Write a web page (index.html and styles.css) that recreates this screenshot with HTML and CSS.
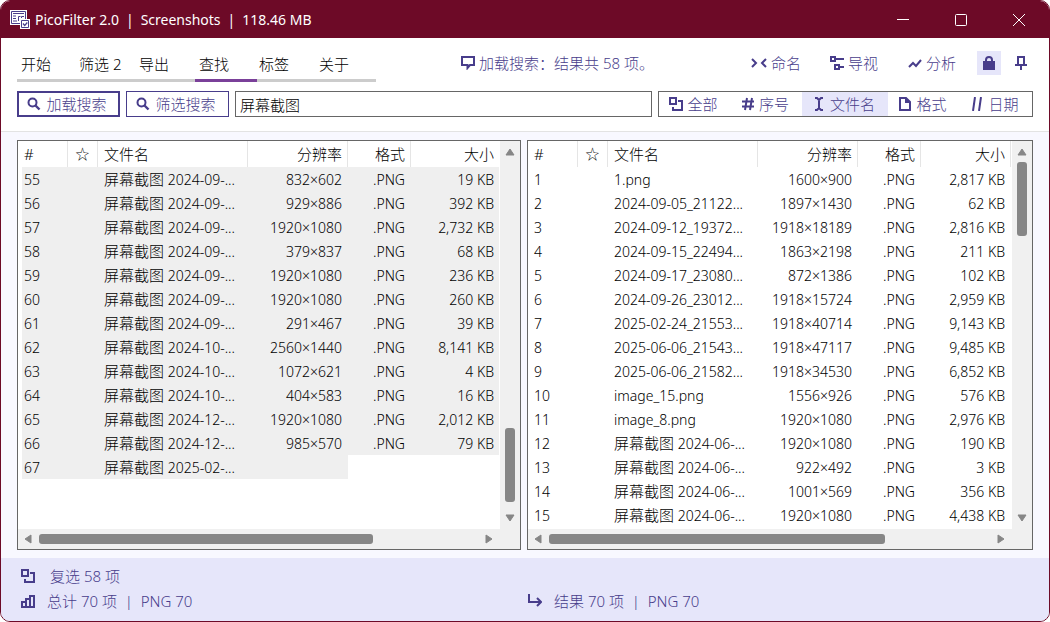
FILE: index.html
```html
<!DOCTYPE html>
<html lang="zh-CN">
<head>
<meta charset="utf-8">
<title>PicoFilter 2.0</title>
<link rel="stylesheet" href="styles.css">
</head>
<body>
<svg class="defs" width="0" height="0" aria-hidden="true">
  <symbol id="search" viewBox="0 0 14 14"><circle cx="5.5" cy="5.5" r="4" fill="none" stroke="currentColor" stroke-width="2"/><path d="M8.5 8.5 12.5 12.5" stroke="currentColor" stroke-width="2.4"/></symbol>
  <symbol id="copy" viewBox="0 0 14 14"><path d="M1 1h6v6H1zM9 4h4v9H4v-3" fill="none" stroke="currentColor" stroke-width="2"/></symbol>
  <symbol id="up" viewBox="0 0 10 10"><path d="M5 2 9 8H1z" fill="currentColor" stroke="currentColor" stroke-linejoin="round"/></symbol>
</svg>
<div class="window">
  <header class="titlebar">
    <svg class="logo" viewBox="0 0 20 20" aria-hidden="true"><path d="M0 0h17v15H0z" fill="#fff"/><path d="M1.500 1.500h14v12h-14z" fill="#fff" stroke="#483d8b"/><path d="M3 3.500h11M3 6h3M3 8.500h3M3 11h4M8.500 11V6.500h2M11.500 8V6.500H14" fill="none" stroke="#483d8b"/><path d="M10 9h10v10H10z" fill="#fff"/><path d="M11.500 10.500h7v7h-7z" fill="#fff" stroke="#483d8b"/><path d="m13 13.500 1.700 2 2.600-3" fill="none" stroke="#483d8b" stroke-width="1.200"/></svg>
    <h1 class="title"><span>PicoFilter 2.0</span><span>|</span><span>Screenshots</span><span>|</span><span>118.46 MB</span></h1>
    <div class="window-buttons">
      <button aria-label="最小化"><svg viewBox="0 0 12 12"><path d="M0 5.500h12"/></svg></button>
      <button aria-label="最大化"><svg viewBox="0 0 12 12"><rect x=".5" y=".5" width="11" height="11" rx="1"/></svg></button>
      <button aria-label="关闭"><svg viewBox="0 0 12 12"><path d="m0 0 12 12M12 0 0 12"/></svg></button>
    </div>
  </header>

  <section class="toolbar">
    <div class="menu-row">
      <nav class="tabs">
        <button>开始</button><button>筛选 2</button><button>导出</button><button class="active">查找</button><button>标签</button><button>关于</button>
      </nav>
      <p class="message"><svg class="icon" viewBox="0 0 14 14"><path d="M1 1h12v8H9L6.500 12V9H1z" fill="none" stroke="currentColor" stroke-width="2"/></svg>加载搜索：结果共 58 项。</p>
      <div class="actions">
        <button class="action"><svg class="icon wide" viewBox="0 0 16 14"><path d="m1 3 4 4-4 4M15 3l-4 4 4 4" fill="none" stroke="currentColor" stroke-width="2"/></svg>命名</button>
        <button class="action"><svg class="icon" viewBox="0 0 14 14"><path d="M1 1h4v4H1zM6 3h8M5 9h4v4H5zM10 11h4" fill="none" stroke="currentColor" stroke-width="2"/></svg>导视</button>
        <button class="action"><svg class="icon" viewBox="0 0 14 14"><path d="m1 11 4-4 3 3 5-6" fill="none" stroke="currentColor" stroke-width="2"/></svg>分析</button>
        <button class="square on" aria-label="锁定"><svg class="icon" viewBox="0 0 14 14"><path d="M1 5h12v9H1z" fill="currentColor"/><path d="M4 6V4a3 3 0 0 1 6 0v2" fill="none" stroke="currentColor" stroke-width="2"/></svg></button>
        <button class="square" aria-label="置顶"><svg class="icon" viewBox="0 0 14 14"><path d="M4 9V1h6v8M1 9h12M7 9v5" fill="none" stroke="currentColor" stroke-width="2"/></svg></button>
      </div>
    </div>
    <div class="search-row">
      <button class="search primary"><svg class="icon"><use href="#search"/></svg>加载搜索</button>
      <button class="search"><svg class="icon"><use href="#search"/></svg>筛选搜索</button>
      <input class="query" type="text" value="屏幕截图" aria-label="搜索内容">
      <div class="scope">
        <button><svg class="icon"><use href="#copy"/></svg>全部</button>
        <button><svg class="icon" viewBox="0 0 14 14"><path d="M6 1 4 13M11 1 9 13M1 4.500h12M1 9.500h12" fill="none" stroke="currentColor" stroke-width="2"/></svg>序号</button>
        <button class="on"><svg class="icon" viewBox="0 0 14 14"><path d="M3 1h2l2 2 2-2h2M3 13h2l2-2 2 2h2M7 2v10" fill="none" stroke="currentColor" stroke-width="2"/></svg>文件名</button>
        <button><svg class="icon" viewBox="0 0 14 14"><path d="M2 1h6l4 4v8H2zM8 1v4h4" fill="none" stroke="currentColor" stroke-width="2"/></svg>格式</button>
        <button><svg class="icon" viewBox="0 0 14 14"><path d="M5 0 3 14M11 0 9 14" fill="none" stroke="currentColor" stroke-width="2"/></svg>日期</button>
      </div>
    </div>
  </section>

  <main class="lists">
    <section class="list picked">
      <div class="view"><table>
        <colgroup><col class="c-num"><col class="c-star"><col><col class="c-res"><col class="c-fmt"><col class="c-size"></colgroup>
        <thead><tr><th>#</th><th class="star">☆</th><th>文件名</th><th class="r">分辨率</th><th class="r">格式</th><th class="r">大小</th></tr></thead>
        <tbody id="left-rows"></tbody>
      </table></div>
      <div class="vbar"><svg class="arrow"><use href="#up"/></svg><div class="track"><i class="before"></i><i class="thumb"></i><i class="after"></i></div><svg class="arrow down"><use href="#up"/></svg></div>
      <div class="hbar"><svg class="arrow left"><use href="#up"/></svg><div class="track"><i class="thumb"></i><i class="after"></i></div><svg class="arrow right"><use href="#up"/></svg></div>
    </section>
    <section class="list results">
      <div class="view"><table>
        <colgroup><col class="c-num"><col class="c-star"><col><col class="c-res"><col class="c-fmt"><col class="c-size"></colgroup>
        <thead><tr><th>#</th><th class="star">☆</th><th>文件名</th><th class="r">分辨率</th><th class="r">格式</th><th class="r">大小</th></tr></thead>
        <tbody id="right-rows"></tbody>
      </table></div>
      <div class="vbar"><svg class="arrow"><use href="#up"/></svg><div class="track"><i class="thumb"></i><i class="after"></i></div><svg class="arrow down"><use href="#up"/></svg></div>
      <div class="hbar"><svg class="arrow left"><use href="#up"/></svg><div class="track"><i class="thumb"></i><i class="after"></i></div><svg class="arrow right"><use href="#up"/></svg></div>
    </section>
  </main>

  <footer class="status">
    <div class="status-col">
      <p class="first"><svg class="icon"><use href="#copy"/></svg>复选 58 项</p>
      <p><svg class="icon" viewBox="0 0 14 14"><path d="M1 13V8h4v5M5 13V5h4v8M9 13V2h4v11M0 13h14" fill="none" stroke="currentColor" stroke-width="2"/></svg>总计 70 项&nbsp; |&nbsp; PNG 70</p>
    </div>
    <div class="status-col">
      <p><svg class="icon" viewBox="0 0 14 14"><path d="M1 0v8h12M9 4l4 4-4 4" fill="none" stroke="currentColor" stroke-width="2"/></svg>结果 70 项&nbsp; |&nbsp; PNG 70</p>
    </div>
  </footer>
</div>
<script src="app.js"></script>
</body>
</html>
```
FILE: styles.css
```css
* { box-sizing: border-box; }
:root {
  --ink: #483d8b;
  --maroon: #6d0a27;
  --lavender: #e6e6fa;
  --latin: "Noto Sans", "Noto Sans CJK SC", sans-serif;
}
body { margin: 0; background: #fff; font: 300 15px/24px var(--latin); color: #000; }
button, input { font: inherit; color: inherit; background: none; border: 0; padding: 0; margin: 0; }
p, h1 { margin: 0; }
button { display: flex; align-items: center; justify-content: center; white-space: nowrap; }
svg { display: block; flex: none; }
.defs { position: absolute; }
.icon { width: 14px; height: 14px; }
.icon.wide { width: 16px; }

.window { min-height: 100vh; display: flex; flex-direction: column; border: 1px solid var(--maroon); border-radius: 10px; overflow: hidden; background: #f8f8ff; }

.titlebar { display: flex; align-items: center; height: 37px; padding: 0 1px 0 9px; background: var(--maroon); color: #fff; }
.logo { width: 20px; height: 20px; }
.title { flex: 1; display: flex; gap: 7px; margin-left: 5px; font: 400 14px/20px var(--latin); }
.window-buttons { display: flex; }
.window-buttons button { width: 58px; height: 36px; }
.window-buttons svg { width: 12px; height: 12px; fill: none; stroke: #fff; stroke-width: 1; }

.toolbar { background: #fff; border-bottom: 1px solid #e3e3e3; padding: 10px 16px 14px; }
.menu-row { display: flex; align-items: flex-start; justify-content: space-between; margin-bottom: 9px; color: var(--ink); }
.tabs { display: grid; grid-template-columns: 58px repeat(5, 60px); padding-right: 1px; color: #000; border-bottom: 3px solid #ccc; }
.tabs button { height: 31px; padding: 0 4px; justify-content: flex-start; }
.tabs .active { position: relative; }
.tabs .active::after { content: ""; position: absolute; left: 0; right: -2px; bottom: -3px; height: 3px; background: #7a4099; }
.message { display: flex; align-items: center; gap: 4px; padding: 3px 4px 0 0; }
.actions { display: flex; align-items: center; gap: 8px; padding-top: 3px; margin-bottom: -1px; }
.action { gap: 4px; width: 70px; padding-right: 4px; }
.square { width: 24px; height: 24px; }
.on { background: var(--lavender); }

.search-row { display: flex; gap: 6px; color: var(--ink); }
.search { width: 103px; height: 26px; gap: 5px; padding-right: 3px; border: 1px solid var(--ink); }
.primary { border-width: 2px; }
.query { flex: 1; min-width: 0; height: 26px; padding: 0 4px; border: 1px solid #666; border-radius: 0; color: #000; }
.scope { display: grid; grid-template-columns: 72fr 71fr 86fr 72fr 72fr; width: 375px; border: 1px solid #666; }
.scope button { gap: 4px; height: 24px; padding-right: 3px; }

.lists { flex: 1; display: grid; grid-template-columns: 504fr 506fr; gap: 6px; padding: 8px 16px; }
.list { display: grid; grid-template: 1fr 20px / 1fr 20px; border: 1px solid #666; background: #f0f0f0; min-width: 0; }
.view { background: #fff; min-width: 0; overflow: hidden; }
.results .view { padding-right: 1px; }
table { width: 100%; table-layout: fixed; border-collapse: separate; border-spacing: 0; font: 300 14px/22px var(--latin); }
.c-num { width: 50px; } .c-star { width: 30px; } .c-res { width: 100px; } .c-fmt { width: 63px; } .c-size { width: 89px; }
.results .c-size { width: 90px; }
th { height: 26px; padding: 0 5px 0 6px; border-right: 1px solid #e5e5e5; font-size: 15px; font-weight: 300; text-align: left; }
.picked th:last-child { border-color: #fff; }
td { height: 24px; padding: 2px 6px 0; white-space: nowrap; overflow: hidden; }
th.star { padding: 0; text-align: center; font-size: 14px; }
th.r, td.r { text-align: right; }
.han { font-size: 15px; line-height: 20px; }
.picked td { background: #efefef; }
.picked td:first-child { border-left: 4px solid #fff; padding-left: 2px; }
.picked td:last-child { border-right: 1px solid #fff; padding-right: 5px; }
.picked td.blank { background: #fff; }

.vbar { display: flex; flex-direction: column; align-items: center; padding: 6px 0; }
.hbar { display: flex; align-items: center; padding: 0 6px 0 5px; }
.arrow { width: 10px; height: 10px; color: #868686; }
.down { transform: rotate(180deg); }
.left { transform: rotate(-90deg); }
.right { transform: rotate(90deg); }
.track { flex: 1; display: flex; }
.vbar .track { flex-direction: column; width: 10px; padding: 5px 0 4px; }
.hbar .track { height: 10px; padding: 0 4px 0 6px; }
.thumb { background: #868686; border-radius: 3px; }
.vbar .thumb { flex: 74; }
.vbar .before { flex: 266; }
.vbar .after { flex: 273; }
.picked .vbar .after { flex: 7; }
.hbar .thumb { flex: 334; }
.hbar .after { flex: 107; }

.status { display: grid; grid-template-columns: 507fr 505fr; min-height: 63px; padding: 5px 16px 8px 20px; background: var(--lavender); color: var(--ink); }
.status-col { display: flex; flex-direction: column; justify-content: flex-end; }
.status p { display: flex; align-items: center; gap: 12px; height: 25px; }
.status .first { gap: 15px; }
```
FILE: app.js
```js
const S = "屏幕截图";
const left = [
  [55, S, "2024-09-...", "832×602", "19"], [56, S, "2024-09-...", "929×886", "392"],
  [57, S, "2024-09-...", "1920×1080", "2,732"], [58, S, "2024-09-...", "379×837", "68"],
  [59, S, "2024-09-...", "1920×1080", "236"], [60, S, "2024-09-...", "1920×1080", "260"],
  [61, S, "2024-09-...", "291×467", "39"], [62, S, "2024-10-...", "2560×1440", "8,141"],
  [63, S, "2024-10-...", "1072×621", "4"], [64, S, "2024-10-...", "404×583", "16"],
  [65, S, "2024-12-...", "1920×1080", "2,012"], [66, S, "2024-12-...", "985×570", "79"],
  [67, S, "2025-02-...", "", ""]
];
const right = [
  [1, "", "1.png", "1600×900", "2,817"], [2, "", "2024-09-05_21122...", "1897×1430", "62"],
  [3, "", "2024-09-12_19372...", "1918×18189", "2,816"], [4, "", "2024-09-15_22494...", "1863×2198", "211"],
  [5, "", "2024-09-17_23080...", "872×1386", "102"], [6, "", "2024-09-26_23012...", "1918×15724", "2,959"],
  [7, "", "2025-02-24_21553...", "1918×40714", "9,143"], [8, "", "2025-06-06_21543...", "1918×47117", "9,485"],
  [9, "", "2025-06-06_21582...", "1918×34530", "6,852"], [10, "", "image_15.png", "1556×926", "576"],
  [11, "", "image_8.png", "1920×1080", "2,976"], [12, S, "2024-06-...", "1920×1080", "190"],
  [13, S, "2024-06-...", "922×492", "3"], [14, S, "2024-06-...", "1001×569", "356"],
  [15, S, "2024-06-...", "1920×1080", "4,438"]
];
function fill(id, rows) {
  document.getElementById(id).innerHTML = rows.map(([n, han, name, res, size]) => {
    const blank = size ? "" : " blank";
    const file = (han ? `<span class="han">${han}</span> ` : "") + name;
    return `<tr><td>${n}</td><td></td><td>${file}</td><td class="r">${res}</td>` +
      `<td class="r${blank}">${size ? ".PNG" : ""}</td><td class="r${blank}">${size ? size + " KB" : ""}</td></tr>`;
  }).join("");
}
fill("left-rows", left);
fill("right-rows", right);
```
